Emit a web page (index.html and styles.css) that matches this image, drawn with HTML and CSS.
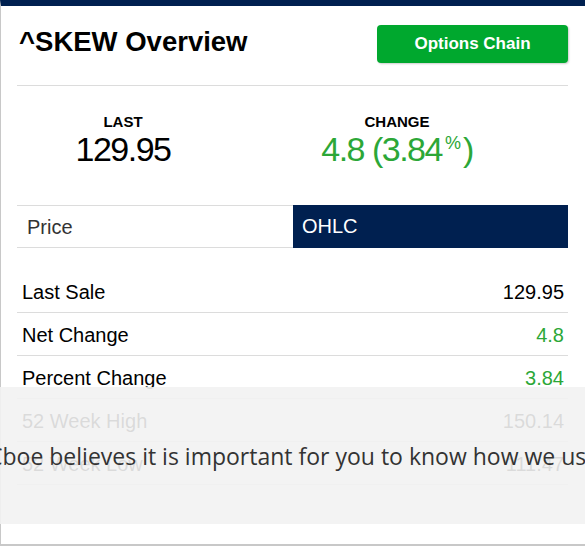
FILE: index.html
```html
<!DOCTYPE html>
<html>
<head>
<title>^SKEW Overview</title>
<link rel="stylesheet" href="styles.css">
</head>
<body>

<div id="card">

	<div id="header">
		<h1>^SKEW Overview</h1>
		<a id="chainBtn" href="#">Options Chain</a>
	</div><!-- end header -->

	<div id="quote">
		<div class="quoteCell">
			<div class="quoteLabel">LAST</div>
			<div class="quoteValue">129.95</div>
		</div>
		<div class="quoteCell">
			<div class="quoteLabel">CHANGE</div>
			<div class="quoteValue up">4.8 (3.84<sup>%</sup>)</div>
		</div>
	</div><!-- end quote -->

	<div id="tabs">
		<a class="tab" href="#">Price</a>
		<a class="tab active" href="#">OHLC</a>
	</div>

	<table id="stats">
		<tr><td>Last Sale</td><td class="num">129.95</td></tr>
		<tr><td>Net Change</td><td class="num up">4.8</td></tr>
		<tr><td>Percent Change</td><td class="num up">3.84</td></tr>
		<tr><td>52 Week High</td><td class="num">150.14</td></tr>
		<tr><td>52 Week Low</td><td class="num">111.47</td></tr>
	</table>

</div><!-- end card -->

<div id="cookies">
	<p>Cboe believes it is important for you to know how we use cookies on our websites.</p>
</div>

</body>
</html>
```

FILE: styles.css
```css
* {
	margin: 0;
	padding: 0;
	box-sizing: border-box;
}

body {
	font-family: "Liberation Sans", Arial, sans-serif;
	color: #000;
	background: #fff;
	overflow: hidden;
}

a {
	text-decoration: none;
}

#card {
	width: 600px;
	height: 546px;
	border-top: 6px solid #002050;
	border-left: 1px solid #c8c8c8;
	border-bottom: 2px solid #c8c8c8;
	padding: 0 17px 0 16px;
	overflow: hidden;
}

#header {
	width: 551px;
	display: flex;
	justify-content: space-between;
	align-items: flex-start;
	padding: 19px 0 22px;
	border-bottom: 1px solid #dcdcdc;
}

#header h1 {
	font-size: 27.5px;
	line-height: 30px;
	font-weight: bold;
	margin: 2px 0 0 2px;
}

#chainBtn {
	display: flex;
	align-items: center;
	justify-content: center;
	width: 191px;
	height: 38px;
	background: #00a82e;
	color: #fff;
	font-size: 17px;
	font-weight: bold;
	border-radius: 4px;
	box-shadow: 1px 1px 2px rgba(0, 0, 0, 0.2);
}

#quote {
	display: grid;
	grid-template-columns: 212px 336px;
	margin-top: 27px;
	text-align: center;
}

.quoteLabel {
	font-size: 15px;
	line-height: 17px;
	font-weight: bold;
}

.quoteValue {
	font-size: 34px;
	line-height: 39px;
	letter-spacing: -1.5px;
}

.quoteValue sup {
	font-size: 18px;
	line-height: 0;
	letter-spacing: 0;
	vertical-align: 12px;
	margin: 0 2px 0 3px;
}

.up {
	color: #2ca737;
}

#tabs {
	width: 551px;
	display: grid;
	grid-template-columns: 276px 275px;
	margin-top: 36px;
}

.tab {
	display: block;
	height: 43px;
	line-height: 43px;
	font-size: 20px;
	color: #333;
	padding-left: 10px;
	border-top: 1px solid #dcdcdc;
	border-bottom: 1px solid #dcdcdc;
}

.tab.active {
	background: #002050;
	color: #fff;
	border-color: #002050;
	padding-left: 9px;
	line-height: 41px;
}

#stats {
	width: 551px;
	border-collapse: collapse;
	margin-top: 21px;
	font-size: 20px;
}

#stats td {
	height: 43px;
	padding: 4px 4px 0 5px;
	border-bottom: 1px solid #dcdcdc;
}

#stats td.num {
	text-align: right;
}

#cookies {
	position: absolute;
	left: 0;
	top: 387px;
	width: 585px;
	height: 137px;
	background: rgba(242, 242, 242, 0.9);
	overflow: hidden;
}

#cookies p {
	font-family: "Open Sans", sans-serif;
	font-size: 23px;
	line-height: 32px;
	color: #333;
	white-space: nowrap;
	margin: 53px 0 0 -12px;
}
```
